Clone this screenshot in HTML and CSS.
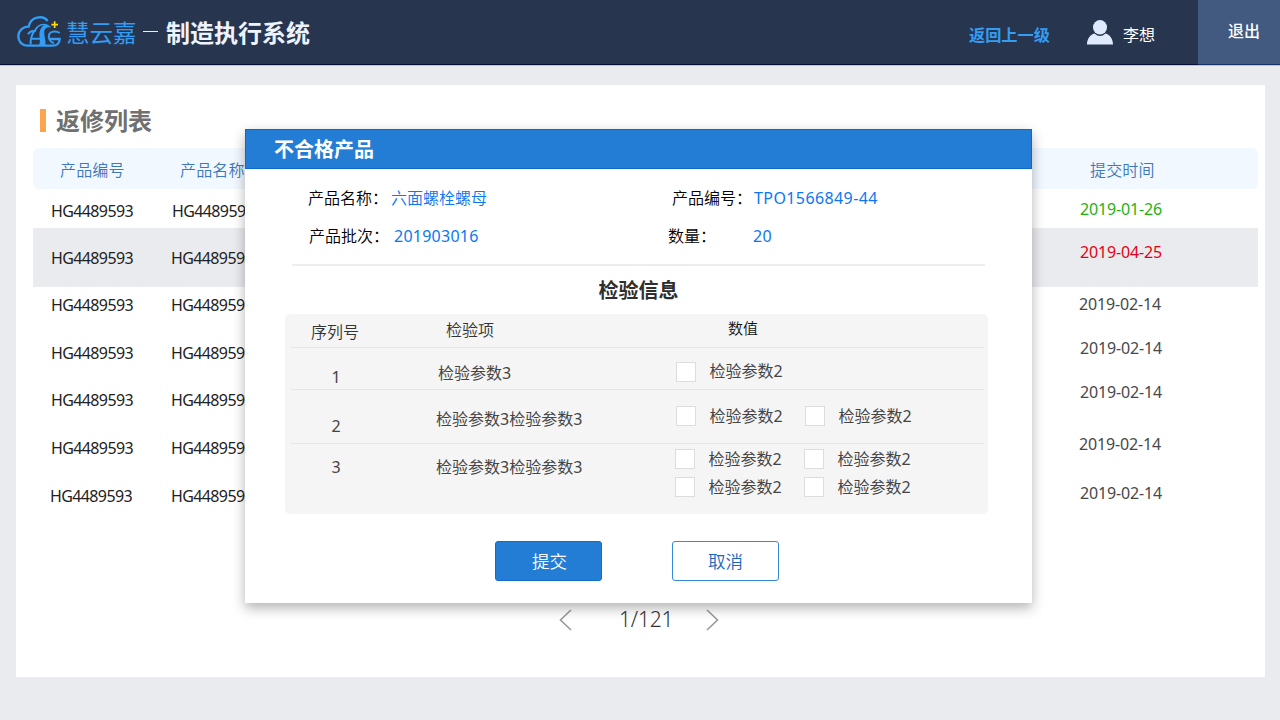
FILE: index.html
```html
<!DOCTYPE html>
<html lang="zh-CN">
<head>
<meta charset="utf-8">
<title>制造执行系统</title>
<link rel="stylesheet" href="styles.css">
</head>
<body>
<header class="topbar">
  <svg class="logo" viewBox="9 12 132 93" fill="none" stroke="#339cf4" stroke-linecap="butt">
    <path stroke-width="7" d="M101 27C86 8 50 14 44 44C27 44 13 56 13 73C13 90 26 101 40 101H116C130 101 137 92 137 81H108"/>
    <path stroke-width="6" d="M137 63C127 56 111 57 106 66C101 77 108 91 120 93M52 80H84"/>
    <path stroke-width="6" d="M42 67C47 58 53 56 61 57C54 67 49 82 50 98"/>
    <path fill="#339cf4" stroke="none" d="M59 59C65 36 96 25 112 47C101 44 93 48 91 57C89 69 97 86 94 101H74C82 87 74 73 77 59C80 49 84 43 90 40C77 40 69 48 65 60Z"/>
    <path stroke="#ffdc00" stroke-width="5" d="M122 28V48M112 38H132"/>
  </svg>
  <span class="brand">慧云嘉</span>
  <span class="dash"></span>
  <h1 class="system">制造执行系统</h1>
  <a class="back">返回上一级</a>
  <svg class="avatar" viewBox="0 0 26 25" fill="#dfeaff"><ellipse cx="13" cy="7.3" rx="7" ry="7.3"/><path d="M0 24.500C0 19 3 14.500 7.500 13.400Q13 18.500 18.500 13.400C23 14.500 26 19 26 24.500Z"/></svg>
  <span class="user">李想</span>
  <a class="logout">退出</a>
</header>

<main class="card">
  <h2 class="page-title">返修列表</h2>
  <div class="list">
    <div class="row head"><span>产品编号</span><span class="name">产品名称</span><span class="date">提交时间</span></div>
    <div class="row r1"><span>HG4489593</span><span class="name">HG4489593</span><span class="date ok">2019-01-26</span></div>
    <div class="row r2"><span>HG4489593</span><span class="name">HG4489593</span><span class="date late">2019-04-25</span></div>
    <div class="row r3"><span>HG4489593</span><span class="name">HG4489593</span><span class="date">2019-02-14</span></div>
    <div class="row r4"><span>HG4489593</span><span class="name">HG4489593</span><span class="date">2019-02-14</span></div>
    <div class="row r5"><span>HG4489593</span><span class="name">HG4489593</span><span class="date">2019-02-14</span></div>
    <div class="row r6"><span>HG4489593</span><span class="name">HG4489593</span><span class="date">2019-02-14</span></div>
    <div class="row r7"><span>HG4489593</span><span class="name">HG4489593</span><span class="date">2019-02-14</span></div>
  </div>
  <nav class="pager">
    <svg class="chev" viewBox="0 0 13 22"><path d="M12 1L1.500 11L12 21"/></svg>
    <span class="page">1/121</span>
    <svg class="chev" viewBox="0 0 13 22"><path d="M1 1L11.500 11L1 21"/></svg>
  </nav>
</main>

<section class="modal">
  <h3 class="modal-head">不合格产品</h3>
  <div class="info first"><span>产品名称<em>：</em></span><b>六面螺栓螺母</b><span>产品编号<em>：</em></span><b class="num">TPO1566849-44</b></div>
  <div class="info second"><span>产品批次<em>：</em></span><b class="num">201903016</b><span>数量<em>：</em></span><b class="num">20</b></div>
  <h4 class="sub">检验信息</h4>
  <div class="panel">
    <div class="line l0"><span class="no">序列号</span><span class="item">检验项</span><span class="value">数值</span></div>
    <div class="line l1"><span class="no">1</span><span class="item">检验参数3</span>
      <div class="opts"><label><i></i>检验参数2</label></div></div>
    <div class="line l2"><span class="no">2</span><span class="item">检验参数3检验参数3</span>
      <div class="opts"><label><i></i>检验参数2</label><label><i></i>检验参数2</label></div></div>
    <div class="line l3"><span class="no">3</span><span class="item">检验参数3检验参数3</span>
      <div class="opts"><label><i></i>检验参数2</label><label><i></i>检验参数2</label><label><i></i>检验参数2</label><label><i></i>检验参数2</label></div></div>
  </div>
  <div class="actions"><button class="btn primary">提交</button><button class="btn">取消</button></div>
</section>
</body>
</html>
```
FILE: styles.css
```css
* { box-sizing: border-box; }
body {
  margin: 0; width: 1280px; height: 720px; overflow: hidden; position: relative;
  background: #eaebef; color: #222;
  font: 16px/20px "Noto Sans", "Noto Sans CJK SC", sans-serif;
}
h1, h2, h3, h4 { margin: 0; white-space: nowrap; }
span, label, b { white-space: nowrap; }

.topbar { display: flex; height: 66px; background: #27364e; border-bottom: 1px solid #bfc3cf; box-shadow: inset 0 -1px #06103a; color: #fff; }
.logo { width: 44px; height: 31px; margin: 16px 0 0 17px; overflow: visible; }
.brand { width: 71px; margin: 18px 0 0 5px; font-size: 23.5px; line-height: 30px; color: #339cf4; font-weight: 400; }
.dash { width: 15px; height: 1px; margin: 31px 8px 0 6px; background: #e8f0ff; }
.system { width: 803px; margin-top: 18px; font-size: 24px; line-height: 30px; font-weight: 700; color: #edf3ff; }
.back { width: 118px; margin-top: 25px; font-weight: 700; font-size: 16.2px; color: #339cf4; white-space: nowrap; }
.avatar { width: 26px; height: 25px; margin-top: 20px; }
.user { width: 85px; padding-left: 10px; margin-top: 25px; }
.logout { flex: 1; padding: 21px 0 0 30px; background: #425a80; box-shadow: inset 0 -1px #14346a; font-weight: 500; }

.card { width: 1249px; height: 592px; margin: 19px 0 0 16px; padding: 24px 7px 0 17px; background: #fff; }
.page-title { margin-left: 7px; padding-left: 10px; border-left: 6px solid #fda450; height: 23px; font-size: 24px; line-height: 23px; color: #707070; }
.list { margin-top: 16px; }
.row { display: grid; grid-template-columns: 120px 907px 1fr; align-items: start; }
.row span { padding-left: 18px; letter-spacing: -0.62px; }
.row .date { padding-left: 20px; color: #484848; letter-spacing: -0.15px; }
.row .ok { color: #1db210; }
.row .late { color: #e60012; }
.row.head { height: 41px; padding-top: 12px; background: #f2f8ff; border-radius: 6px; }
.row.head span { padding-left: 27px; color: #3b78bd; letter-spacing: 0.15px; font-weight: 350; }
.row.head .date { padding-left: 30px; color: #3b78bd; }
.r1 { height: 39px; padding-top: 10px; } .r1 span { padding-top: 2px; } .r1 .date { padding-top: 0; } .r1 .name { margin-left: 1px; }
.r2 { height: 59px; padding-top: 14px; background: #eaebef; } .r2 span { padding-top: 6px; } .r2 .date { padding-top: 0; }
.r3 { height: 42px; padding-top: 8px; } .r3 .date { margin-top: -1px; }
.r4 { height: 48px; padding-top: 9px; } .r4 span { padding-top: 5px; } .r4 .date { padding-top: 0; }
.r5 { height: 47px; padding-top: 5px; } .r5 span { padding-top: 8px; } .r5 .date { padding-top: 0; }
.r6 { height: 48px; padding-top: 10px; } .r6 span { padding-top: 4px; } .r6 .date { padding-top: 0; }
.r7 { height: 48px; padding-top: 11px; } .r7 span { padding-top: 3px; margin-left: -1px; } .r7 .name { margin-left: 0; } .r7 .date { padding-top: 0; margin-left: 0; }
.r3 .date, .r6 .date { padding-left: 19px; }
.pager { display: flex; align-items: center; height: 30px; margin: 85px 0 0 526px; }
.page { width: 54px; margin: -2px 33px 0 47px; font-size: 21px; line-height: 26px; color: #333; letter-spacing: -0.2px; font-weight: 350; }
.chev { width: 13px; height: 22px; fill: none; stroke: #999; stroke-width: 1.6; }

.modal { position: absolute; left: 245px; top: 129px; width: 787px; height: 474px; background: #fff; box-shadow: 0 5px 12px rgba(0,0,0,.3); }
.modal-head { height: 40px; padding-left: 28px; border: 1px solid #0d67cf; background: #247dd5; color: #fff; font-size: 20px; line-height: 39px; }
.info { display: grid; grid-template-columns: 83px 280px 83px 1fr; height: 38px; color: #000; }
.info span { font-weight: 350; }
.info em { font-style: normal; }
.info b { font-weight: 400; color: #0a77f5; }
.info .num { letter-spacing: 0.4px; }
.first { padding: 19px 0 0 63px; }
.first b:nth-child(2) { font-weight: 350; }
.first span:nth-child(3) { padding-left: 1px; }
.second { height: 59px; margin: 0 47px; padding: 19px 0 0 17px; border-bottom: 2px solid #ededed; grid-template-columns: 85px 274px 85px 1fr; }
.info.second .num { letter-spacing: 0.25px; }
.sub { margin-top: 14px; text-align: center; font-size: 20px; line-height: 22px; color: #2e2e2e; }
.panel { width: 703px; height: 200px; margin: 12px 0 0 40px; padding: 0 4px 0 6px; background: #f5f5f5; border-radius: 5px; color: #444; }
.line { display: grid; grid-template-columns: 145px 239px 1fr; align-items: start; border-bottom: 1px solid #e6e6e6; }
.no { width: 90px; text-align: center; }
.l0 { height: 34px; padding-top: 4px; font-weight: 350; color: #333; }
.l0 .no { padding-top: 4px; margin-left: -1px; } .l0 .item { padding: 2px 0 0 10px; } .value { padding-left: 53px; color: #111; font-size: 15px; }
.l1 { height: 42px; padding-top: 13px; } .l1 .no { padding-top: 6px; } .l1 .item { padding: 2px 0 0 2px; }
.l2 { height: 54px; padding-top: 16px; } .l2 .no { padding-top: 10px; } .l2 .item { padding-top: 3px; }
.l3 { border: 0; padding-top: 5px; } .l3 .no { padding-top: 8px; } .l3 .item { padding-top: 8px; }
.opts { display: grid; grid-template-columns: 129px 129px; row-gap: 8px; }
.l1 .opts, .l2 .opts { padding-left: 1px; }
.l1 .opts i { margin-top: 2px; }
.opts label { display: flex; gap: 13.500px; height: 20px; align-items: center; }
.opts i { width: 20px; height: 20px; background: #fff; border: 1px solid #ddd; flex: none; }
.actions { display: flex; gap: 70px; margin: 27px 0 0 250px; }
.btn { width: 107px; height: 40px; padding: 0; border: 1px solid #3888d8; border-radius: 3px; background: #fff; color: #1767c6; font: 350 17.500px/37px "Noto Sans", "Noto Sans CJK SC", sans-serif; }
.primary { padding-left: 2px; background: #247dd5; border-color: #116bd0; color: #fff; }
```
